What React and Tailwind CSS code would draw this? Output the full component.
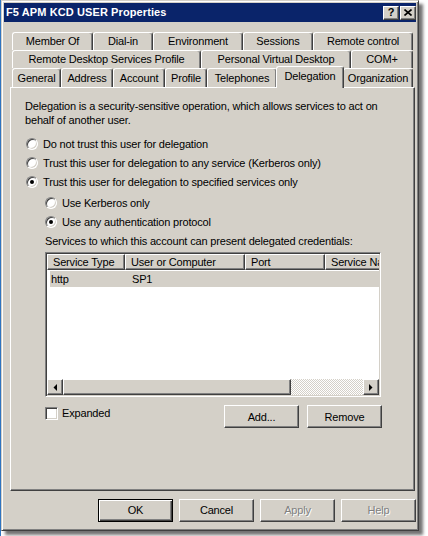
// 사용자 속성 대화상자 (Windows 클래식 스타일)

const raised =
  'border border-t-white border-l-white border-r-[#404040] border-b-[#404040] shadow-[inset_-1px_-1px_0_#808080]';
const sunken =
  'border border-t-[#808080] border-l-[#808080] border-r-white border-b-white shadow-[inset_1px_1px_0_#404040,inset_-1px_-1px_0_#d4d0c8]';

const tabRows = [
  [
    { label: 'Member Of', w: 'w-[81px]' },
    { label: 'Dial-in', w: 'w-[60px]' },
    { label: 'Environment', w: 'w-[90px]' },
    { label: 'Sessions', w: 'w-[70px]' },
    { label: 'Remote control', w: 'w-[100px]' },
  ],
  [
    { label: 'Remote Desktop Services Profile', w: 'w-[189px]' },
    { label: 'Personal Virtual Desktop', w: 'w-[150px]' },
    { label: 'COM+', w: 'w-[62px]' },
  ],
];

const bottomTabs = [
  { label: 'General', w: 'w-[49px]' },
  { label: 'Address', w: 'w-[52px]' },
  { label: 'Account', w: 'w-[52px]' },
  { label: 'Profile', w: 'w-[42px]' },
  { label: 'Telephones', w: 'w-[70px]' },
  { label: 'Delegation', w: 'w-[68px]', selected: true },
  { label: 'Organization', w: 'w-[70px]' },
];

function Tab({ label, w }) {
  return (
    <div
      className={`${w} h-full flex items-center justify-center rounded-t-[3px] border-l border-t border-l-white border-t-white border-r border-r-[#404040] shadow-[inset_-1px_0_0_#808080] whitespace-nowrap`}
    >
      {label}
    </div>
  );
}

function Radio({ checked }) {
  return (
    <div className="w-[12px] h-[12px] rounded-full bg-white border border-t-[#808080] border-l-[#808080] border-r-white border-b-white shadow-[inset_1px_1px_0_#404040,inset_-1px_-1px_0_#d4d0c8] flex items-center justify-center shrink-0">
      {checked && <div className="w-[4px] h-[4px] rounded-full bg-black" />}
    </div>
  );
}

function RadioRow({ checked, label, sub }) {
  return (
    <div className={`h-[19px] flex items-center ${sub ? 'ml-[20px]' : 'ml-[1px]'}`}>
      <Radio checked={checked} />
      <span className="ml-[5px]">{label}</span>
    </div>
  );
}

function Button({ children, def, disabled, className = '' }) {
  return (
    <div
      className={`w-[75px] h-[23px] flex items-center justify-center ${
        def
          ? 'border border-black shadow-[inset_1px_1px_0_#fff,inset_-1px_-1px_0_#404040,inset_-2px_-2px_0_#808080]'
          : raised
      } ${disabled ? 'text-[#808080] [text-shadow:1px_1px_0_#fff]' : ''} ${className}`}
    >
      {children}
    </div>
  );
}

function Arrow({ dir }) {
  return (
    <div className={`w-[16px] h-[16px] flex items-center justify-center bg-[#d4d0c8] ${raised}`}>
      <svg width="4" height="7" viewBox="0 0 4 7">
        {dir === 'left' ? (
          <polygon points="4,0 4,7 0.5,3.5" fill="#000" />
        ) : (
          <polygon points="0,0 0,7 3.5,3.5" fill="#000" />
        )}
      </svg>
    </div>
  );
}

export default function App() {
  return (
    <div className="w-[428px] h-[536px] bg-white border-l border-l-[#2f74c0] font-['Liberation_Sans',Arial,sans-serif] text-[11px] tracking-[-0.17px] text-black overflow-hidden">
      {/* 창 */}
      <div className="w-[418px] h-[531px] bg-[#d4d0c8] p-[2px] border border-t-[#d4d0c8] border-l-[#d4d0c8] border-r-[#404040] border-b-[#404040] shadow-[inset_1px_1px_0_#fff,inset_-1px_-1px_0_#808080,4px_4px_3px_rgba(0,0,0,0.55)] flex flex-col">
        {/* 제목 표시줄 */}
        <div className="h-[19px] bg-[#0a246a] flex items-center pl-[2px]">
          <span className="text-white font-bold text-[11px] tracking-[0.1px] flex-1">F5 APM KCD USER Properties</span>
          <div className={`w-[16px] h-[14px] flex items-center justify-center bg-[#d4d0c8] ${raised}`}>
            <span className="font-bold text-[11px] leading-none">?</span>
          </div>
          <div className={`ml-[1px] w-[16px] h-[14px] flex items-center justify-center bg-[#d4d0c8] ${raised}`}>
            <svg width="8" height="7" viewBox="0 0 8 7">
              <path d="M0.5 0.5 L7.5 6.5 M7.5 0.5 L0.5 6.5" stroke="#000" strokeWidth="1.6" />
            </svg>
          </div>
        </div>

        {/* 탭 */}
        <div className="mt-[10px] ml-[8px] w-[401px]">
          {tabRows.map((row, i) => (
            <div key={i} className="flex h-[18px]">
              {row.map((t) => (
                <Tab key={t.label} {...t} />
              ))}
            </div>
          ))}
          <div className="flex items-end h-[19px]">
            {bottomTabs.map((t) =>
              t.selected ? (
                <div
                  key={t.label}
                  className={`${t.w} -mx-[1px] h-[22px] -mb-[1px] relative z-10 bg-[#d4d0c8] flex items-center justify-center pb-[3px] rounded-t-[3px] border-l border-t border-l-white border-t-white border-r border-r-[#404040] shadow-[inset_-1px_0_0_#808080]`}
                >
                  {t.label}
                </div>
              ) : (
                <Tab key={t.label} {...t} />
              )
            )}
          </div>
        </div>

        {/* 본문 패널 */}
        <div className="ml-[6px] w-[405px] h-[404px] border border-t-white border-l-white border-r-[#404040] border-b-[#404040] shadow-[inset_-1px_-1px_0_#808080] pt-[11px] pl-[14px] leading-[14px]">
          <p>
            Delegation is a security-sensitive operation, which allows services to act on
            <br />
            behalf of another user.
          </p>

          <div className="mt-[7px]">
            <RadioRow label="Do not trust this user for delegation" />
            <RadioRow label="Trust this user for delegation to any service (Kerberos only)" />
            <RadioRow checked label="Trust this user for delegation to specified services only" />
            <div className="mt-[2px]">
              <RadioRow sub label="Use Kerberos only" />
              <RadioRow sub checked label="Use any authentication protocol" />
            </div>
          </div>

          <div className="ml-[20px]">
            <p className="mt-[3px]">Services to which this account can present delegated credentials:</p>

            {/* 목록 */}
            <div className={`mt-[4px] w-[336px] h-[145px] bg-white flex flex-col p-[1px] ${sunken}`}>
              <div className="flex h-[16px] shrink-0 overflow-hidden">
                {[
                  ['Service Type', 'w-[78px]'],
                  ['User or Computer', 'w-[120px]'],
                  ['Port', 'w-[80px]'],
                  ['Service Name', 'w-[80px]'],
                ].map(([h, w]) => (
                  <div
                    key={h}
                    className={`${w} shrink-0 h-full flex items-center pl-[5px] bg-[#d4d0c8] whitespace-nowrap ${raised}`}
                  >
                    {h}
                  </div>
                ))}
              </div>
              <div className="flex-1 pt-[1px]">
                <div className="ml-[3px] h-[16px] bg-[#d4d0c8] flex items-center">
                  <span className="w-[75px] pl-[1px]">http</span>
                  <span className="pl-[7px]">SP1</span>
                </div>
              </div>
              {/* 가로 스크롤바 */}
              <div className="h-[16px] flex shrink-0">
                <Arrow dir="left" />
                <div className={`w-[228px] h-full bg-[#d4d0c8] ${raised}`} />
                <div className="flex-1 h-full bg-[repeating-conic-gradient(#ffffff_0%_25%,#d4d0c8_0%_50%)] bg-[length:2px_2px]" />
                <Arrow dir="right" />
              </div>
            </div>

            <div className="mt-[8px] w-[337px] flex items-start">
              <div className="flex items-center h-[14px] mt-[1px] flex-1">
                <div className={`w-[13px] h-[13px] bg-white ${sunken}`} />
                <span className="ml-[4px]">Expanded</span>
              </div>
              <Button>Add...</Button>
              <Button className="ml-[8px]">Remove</Button>
            </div>
          </div>
        </div>

        {/* 하단 버튼 */}
        <div className="mt-[8px] flex justify-end gap-[6px]">
          <Button def>OK</Button>
          <Button>Cancel</Button>
          <Button disabled>Apply</Button>
          <Button disabled>Help</Button>
        </div>
      </div>
    </div>
  );
}
